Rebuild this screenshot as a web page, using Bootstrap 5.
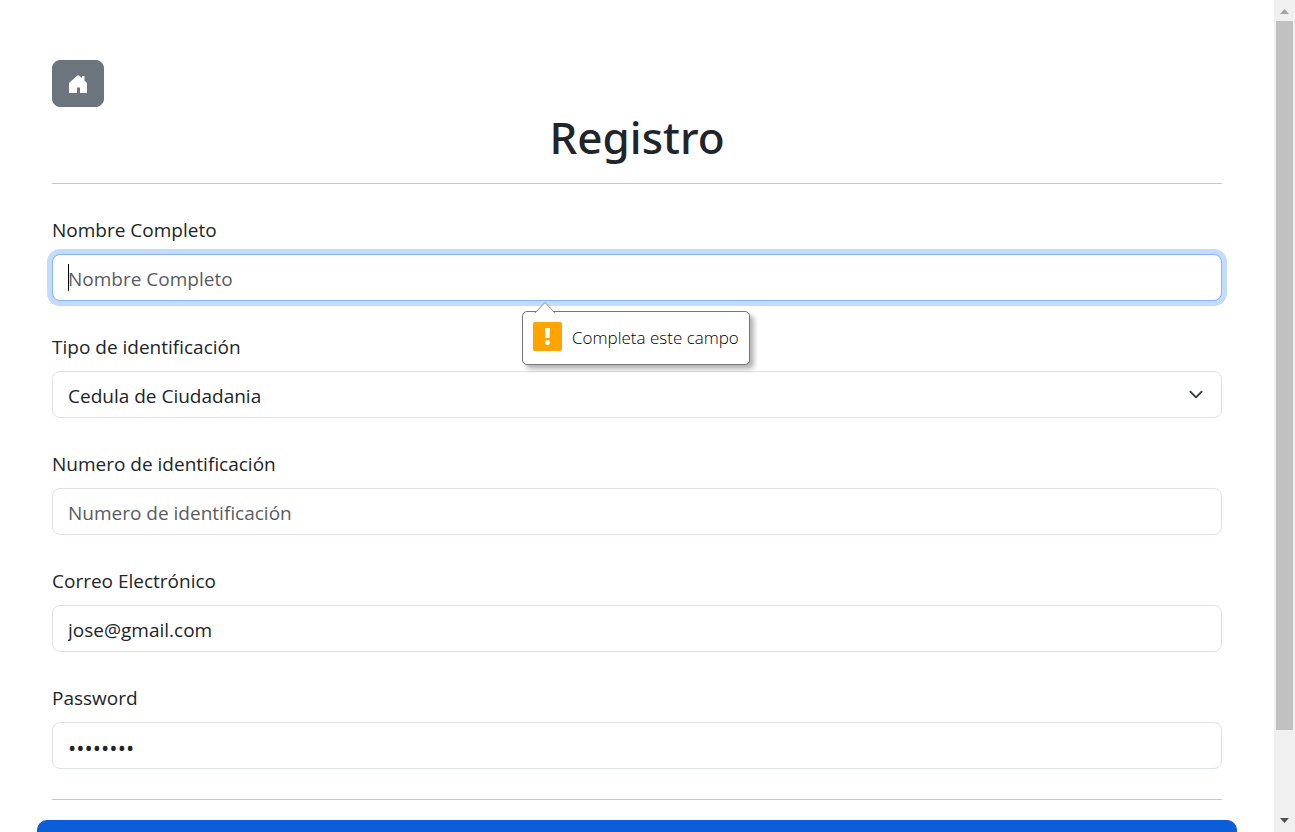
<!DOCTYPE html>
<html lang="es">
<head>
<meta charset="utf-8">
<meta name="viewport" content="width=device-width, initial-scale=1">
<title>Registro</title>
<link href="https://cdn.jsdelivr.net/npm/bootstrap@5.3.0/dist/css/bootstrap.min.css" rel="stylesheet">
<style>
  html { font-size: 20px; }
  body { font-family: "Open Sans", "Noto Sans", sans-serif; font-size: 19px; line-height: 30px; color: #212529; }
  .page { padding: 60px 37px; scrollbar-width: none; }
  .page::-webkit-scrollbar { display: none; }
  .page-inner { padding: 0 15px; }
  .title { font-size: 44px; line-height: 56px; padding-top: 2px; margin-bottom: -2px; font-weight: 500; font-family: "Noto Sans", "Open Sans", sans-serif; }
  .form-label { line-height: 32px; margin-bottom: 8px; }
  .form-control, .form-select { font-size: 19px; line-height: 30px; height: 47px; padding: 8px 15px 6px; border-radius: 8px; border-color: #dee2e6; }
  .form-select { background-size: 20px 15px; background-position: right 15px center; }
  .form-control::placeholder { color: #595c5f; }
  .form-control[type="password"] { font-size: 22px; }
  .first-field { margin-top: 30px; }
  .active-input, .active-input:focus { border-color: #86b7fe; box-shadow: 0 0 0 5px #c2dbfe; caret-color: transparent; }
  .caret { position: absolute; left: 16px; bottom: 10px; width: 1px; height: 27px; background: #000; }
  .hint { position: absolute; top: calc(100% + 10px); left: 470px; z-index: 5; height: 54px; padding: 0 10px; gap: 10px; background: #fff; border: 1px solid #767676; border-radius: 5px; box-shadow: 4px 4px 5px rgba(0,0,0,.3); color: #000; font-size: 17px; font-weight: 300; white-space: nowrap; }
  .hint-arrow { position: absolute; left: 11px; bottom: 100%; margin-bottom: -1px; }
  .hint-icon { margin-bottom: 3px; }
  .btn-home { width: 52px; height: 47px; border-radius: 8px; background: #6c757d; border-color: #6c757d; }
  .btn-send { background: #0b5ed7; border-color: #0b5ed7; border-radius: 10px; }
  .scroll-rail { width: 21px; background: #f0f0f0; }
  .scroll-end { height: 21px; }
  .scroll-thumb { height: 89.75%; margin: 0 2px; background: #c1c1c1; }
</style>
</head>
<body class="d-flex vh-100 overflow-hidden bg-white">
<main class="page flex-grow-1 overflow-auto">
  <form class="page-inner" novalidate>
    <button type="button" class="btn btn-secondary btn-home d-flex align-items-center justify-content-center p-0" aria-label="Inicio">
      <svg width="18" height="18" viewBox="0 0 18 18" fill="#fff" aria-hidden="true"><path d="M9 0 13 3V1H15.500V5.500L18 8V18H11V12.500H8V18H0V8Z"/></svg>
    </button>
    <h1 class="title text-center">Registro</h1>
    <hr>
    <div class="first-field mb-4 position-relative">
      <label class="form-label" for="nombre">Nombre Completo</label>
      <input type="text" class="form-control active-input" id="nombre" placeholder="Nombre Completo" required>
      <span class="caret"></span>
      <div class="hint d-flex align-items-center" role="alert">
        <svg class="hint-arrow" width="22" height="11" viewBox="0 0 22 11" aria-hidden="true"><path d="M1 11 11 .5 21 11" fill="#fff" stroke="#8c8c8c"/></svg>
        <svg class="hint-icon" width="29" height="29" viewBox="0 0 29 29" aria-hidden="true"><rect width="29" height="29" rx="2" fill="#ffa400"/><path d="M12 6H17L16.500 16H12.500Z" fill="#fff"/><circle cx="14.500" cy="20.500" r="2.500" fill="#fff"/></svg>
        <span>Completa este campo</span>
      </div>
    </div>
    <div class="mb-4">
      <label class="form-label" for="tipo">Tipo de identificación</label>
      <select class="form-select" id="tipo"><option>Cedula de Ciudadania</option></select>
    </div>
    <div class="mb-4">
      <label class="form-label" for="numero">Numero de identificación</label>
      <input type="text" class="form-control" id="numero" placeholder="Numero de identificación">
    </div>
    <div class="mb-4">
      <label class="form-label" for="correo">Correo Electrónico</label>
      <input type="email" class="form-control" id="correo" value="jose@gmail.com">
    </div>
    <div class="mb-4">
      <label class="form-label" for="clave">Password</label>
      <input type="password" class="form-control" id="clave" value="12345678">
    </div>
    <hr>
    <div class="row">
      <button type="submit" class="btn btn-primary btn-lg btn-send py-3">Registrar</button>
    </div>
  </form>
</main>
<div class="scroll-rail d-flex flex-column flex-shrink-0" aria-hidden="true">
  <svg class="scroll-end flex-shrink-0" viewBox="0 0 21 21"><path d="M6 14H15L10.500 9Z" fill="#a3a3a3"/></svg>
  <div class="flex-grow-1"><div class="scroll-thumb"></div></div>
  <svg class="scroll-end flex-shrink-0" viewBox="0 0 21 21"><path d="M6 7H15L10.500 12Z" fill="#505050"/></svg>
</div>
</body>
</html>
